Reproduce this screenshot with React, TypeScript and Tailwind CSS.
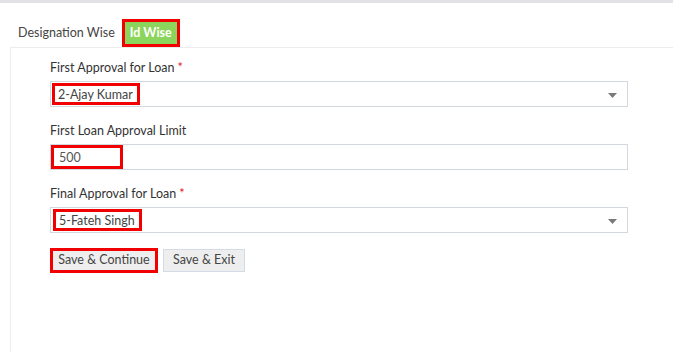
import { useState } from "react"

const Caret = () => (
  <svg width="9" height="5" viewBox="0 0 9 5" className="absolute right-[10px] top-[11px]">
    <path d="M0 0h9L4.5 5z" fill="#7a7a7a" />
  </svg>
)

function Field({ label, required, children }: { label: string; required?: boolean; children: React.ReactNode }) {
  return (
    <div className="mb-[15px]">
      <div className="h-[18px] leading-[18px] mb-[4px] text-[12.5px] text-[#333]">
        {label}
        {required && <span className="text-[#d9161c] ml-[3px]">*</span>}
      </div>
      {children}
    </div>
  )
}

function SelectBox({ value, offset }: { value: string; offset: string }) {
  return (
    <div className="relative h-[26px] border border-[#d3d8df] bg-white flex items-center">
      <span className={`${offset} border-[3px] border-[#f00000] pl-[3px] pr-[4px] h-[22px] leading-[17px] text-[12.5px] text-[#444]`}>{value}</span>
      <Caret />
    </div>
  )
}

export default function App() {
  const [tab, setTab] = useState("id")

  return (
    <div className="w-[673px] h-[352px] bg-white overflow-hidden" style={{ fontFamily: "Lato, 'Open Sans', sans-serif" }}>
      <div className="h-[3px] bg-[#e2e2e4]" />

      <div className="flex items-center h-[28px] mt-[16px] pl-[18px] gap-[7px]">
        <button onClick={() => setTab("designation")} className="text-[12.5px] text-[#444] h-full px-0">
          Designation Wise
        </button>
        <button
          onClick={() => setTab("id")}
          className={`h-full w-[58px] text-[12.5px] font-bold text-white border-[3px] border-[#f00000] ${tab === "id" ? "bg-[#8bd55c]" : "bg-[#8bd55c]"}`}
        >
          Id Wise
        </button>
      </div>

      <div className="ml-[10px] border-l border-t border-[#ececec] h-[310px] pl-[39px] pr-[45px] pt-[11px]">
        <Field label="First Approval for Loan" required>
          <SelectBox value="2-Ajay Kumar" offset="ml-[1px]" />
        </Field>

        <Field label="First Loan Approval Limit">
          <div className="h-[26px] border border-[#d3d8df] bg-white flex items-center">
            <span className="border-[3px] border-[#f00000] pl-[5px] w-[72px] h-[24px] leading-[19px] text-[12.5px] text-[#555]">500</span>
          </div>
        </Field>

        <Field label="Final Approval for Loan" required>
          <SelectBox value="5-Fateh Singh" offset="ml-[2px]" />
        </Field>

        <div className="flex items-center gap-[5px]">
          <button className="h-[25px] w-[108px] border-[3px] border-[#f00000] bg-[#eeeeee] text-[12.5px] text-[#444]">
            Save &amp; Continue
          </button>
          <button className="h-[23px] w-[82px] border border-[#d3dbe6] bg-[#eeeeee] text-[12.5px] text-[#444]">
            Save &amp; Exit
          </button>
        </div>
      </div>
    </div>
  )
}
